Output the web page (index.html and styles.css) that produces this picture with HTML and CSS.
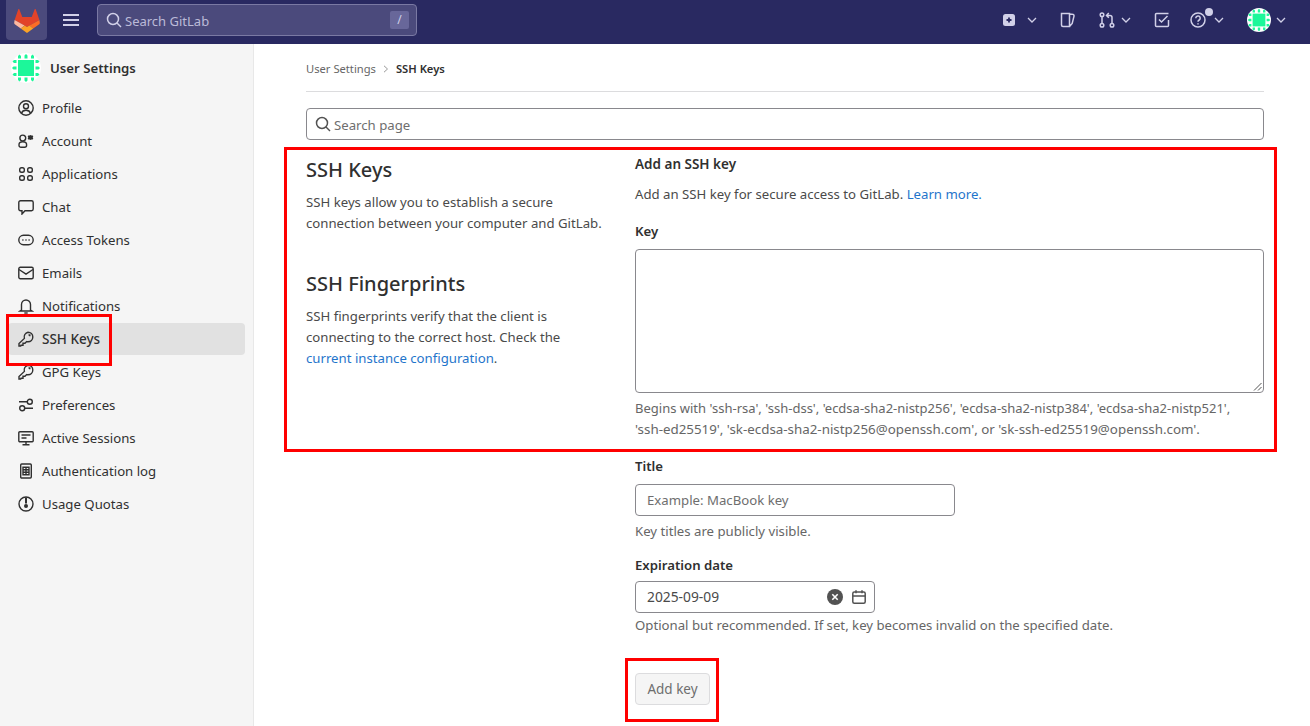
FILE: index.html
```html
<!DOCTYPE html>
<html lang="en">
  <head>
    <meta charset="UTF-8" />
    <meta name="viewport" content="width=device-width, initial-scale=1.0" />
    <title>SSH Keys</title>
    <link rel="stylesheet" href="styles.css">
  </head>
  <body>
    <svg class="sprites" width="0" height="0">
      <symbol id="avatar" viewBox="0 0 30 30">
        <circle cx="15" cy="15" r="15" fill="#fff" />
        <rect x="7" y="7" width="16" height="16" fill="#1cf79a" />
        <g fill="#1cf79a">
          <path d="M8.500 1.500l1.500 1.500v2.500h-3v-2.500zM15 1l1.500 1.500v3h-3v-3zM21.500 1.500l1.500 1.500v2.500h-3v-2.500z" />
          <path d="M8.500 28.500l1.500-1.500v-2.500h-3v2.500zM15 29l1.500-1.500v-3h-3v3zM21.500 28.500l1.500-1.500v-2.500h-3v2.500z" />
          <path d="M1.500 8.500l1.500-1.500h2.500v3h-2.500zM1 15l1.500-1.500h3v3h-3zM1.500 21.500l1.500-1.500h2.500v3h-2.500z" />
          <path d="M28.500 8.500l-1.500-1.500h-2.500v3h2.500zM29 15l-1.500-1.500h-3v3h3zM28.500 21.500l-1.500-1.500h-2.500v3h2.500z" />
        </g>
      </symbol>
    </svg>

    <header class="topbar">
      <a class="logo">
        <svg width="26" height="25" viewBox="0 0 26 25">
          <path fill="#e24329" d="M.6 12 L4.300 1.300 C4.500.8 5.100.8 5.300 1.300 L8.300 9 H17.700 L20.700 1.300 C20.900.8 21.500.8 21.700 1.300 L25.400 12 L13 19Z" />
          <path fill="#fdb9a0" d="M.6 12 L.2 14.800 C.1 15.400.3 15.900.8 16.300 L6.800 20.600 L10.500 17.500Z" />
          <path fill="#fc6d26" d="M25.400 12 L25.800 14.800 C25.900 15.400 25.700 15.900 25.200 16.300 L19.200 20.600 L15.500 17.500Z" />
          <path fill="#fca326" d="M13 25 L6.800 20.600 L10.500 17.500 L13 19 L15.500 17.500 L19.200 20.600Z" />
        </svg>
      </a>
      <button class="burger"><span></span><span></span><span></span></button>
      <div class="top-search">
        <svg class="ico-line" width="16" height="16" viewBox="0 0 16 16"><circle cx="7" cy="7" r="5.500" /><path d="M11 11l4 4" /></svg>
        <span class="top-search-text">Search GitLab</span>
        <kbd class="slash">/</kbd>
      </div>
      <nav class="top-actions">
        <span class="top-btn create">
          <svg width="14" height="14" viewBox="0 0 14 14"><rect x="1" y="1" width="12" height="12" rx="2.500" fill="#d1d0e8" /><path d="M7 4.500v5M4.500 7h5" stroke="#292961" stroke-width="1.800" /></svg>
          <svg class="ico-line chev" width="10" height="6" viewBox="0 0 10 6"><path d="M1 1l4 4 4-4" /></svg>
        </span>
        <span class="top-btn">
          <svg class="ico-line" width="16" height="16" viewBox="0 0 16 16"><path d="M1.500 1.500h8v13h-6.500a1.500 1.500 0 0 1-1.500-1.500zM9.500 2l3 .3a1.500 1.500 0 0 1 1.500 1.800l-1.800 7.400-2.700 3" /></svg>
        </span>
        <span class="top-btn">
          <svg class="ico-line" width="16" height="16" viewBox="0 0 16 16"><circle cx="3" cy="2.800" r="1.800" /><circle cx="3" cy="13.200" r="1.800" /><circle cx="13" cy="13.200" r="1.800" /><path d="M3 4.600v6.800M13 11.400v-6a2 2 0 0 0-2-2h-3M9.800 1l-2.300 2.400 2.300 2.400" /></svg>
          <svg class="ico-line chev" width="10" height="6" viewBox="0 0 10 6"><path d="M1 1l4 4 4-4" /></svg>
        </span>
        <span class="top-btn">
          <svg class="ico-line" width="16" height="16" viewBox="0 0 16 16"><path d="M14.500 8v5.500a1 1 0 0 1-1 1h-11a1 1 0 0 1-1-1v-11a1 1 0 0 1 1-1h12" /><path d="M5 7.500l2.500 2.500 6-6" /></svg>
        </span>
        <span class="top-btn help">
          <svg class="ico-line" width="16" height="16" viewBox="0 0 16 16"><circle cx="8" cy="8" r="7" /><path d="M5.800 6.200a2.200 2.200 0 1 1 3.400 1.800c-.8.500-1.200 1-1.200 1.800" /><path d="M8 11.300v1.200" /></svg>
          <i class="dot"></i>
          <svg class="ico-line chev" width="10" height="6" viewBox="0 0 10 6"><path d="M1 1l4 4 4-4" /></svg>
        </span>
        <span class="top-btn user">
          <svg width="24" height="24"><use href="#avatar" /></svg>
          <svg class="ico-line chev" width="10" height="6" viewBox="0 0 10 6"><path d="M1 1l4 4 4-4" /></svg>
        </span>
      </nav>
    </header>

    <div class="wrap">
      <aside class="sidebar">
        <div class="side-head">
          <svg width="30" height="30"><use href="#avatar" /></svg>
          <strong>User Settings</strong>
        </div>
        <ul class="side-list">
          <li class="side-item">
            <svg class="side-ico" width="16" height="16" viewBox="0 0 16 16"><circle cx="8" cy="8" r="7.200" /><circle cx="8" cy="6.300" r="2.500" /><path d="M3.500 13.200c.6-2 2.400-3 4.500-3s3.900 1 4.500 3" /></svg>
            Profile
          </li>
          <li class="side-item">
            <svg class="side-ico" width="16" height="16" viewBox="0 0 16 16"><circle cx="4.800" cy="5" r="2.900" /><path d="M1 11.800c0-1.700 1.600-3 3.800-3s3.800 1.300 3.800 3v.4c0 1.400-1 2-2 2H3c-1 0-2-.6-2-2z" /><path class="solid" d="M12.500 2l1 .6 1.200-.2.600 1.100-.6 1 .6 1-.6 1.100-1.200-.2-1 .6-1-.6-1.200.2-.6-1.100.6-1-.6-1 .6-1.100 1.200.2z" /></svg>
            Account
          </li>
          <li class="side-item">
            <svg class="side-ico" width="16" height="16" viewBox="0 0 16 16"><rect x="1.700" y="1.700" width="4.600" height="4.600" rx="1.800" /><rect x="9.700" y="1.700" width="4.600" height="4.600" rx="1.800" /><rect x="1.700" y="9.700" width="4.600" height="4.600" rx="1.800" /><rect x="9.700" y="9.700" width="4.600" height="4.600" rx="1.800" /></svg>
            Applications
          </li>
          <li class="side-item">
            <svg class="side-ico" width="16" height="16" viewBox="0 0 16 16"><path d="M2.500 1.800h11a1.700 1.700 0 0 1 1.700 1.700v6.500a1.700 1.700 0 0 1-1.700 1.700H7L4 15v-3.300H2.500A1.700 1.700 0 0 1 .8 10V3.500a1.700 1.700 0 0 1 1.700-1.700z" /></svg>
            Chat
          </li>
          <li class="side-item">
            <svg class="side-ico" width="16" height="16" viewBox="0 0 16 16"><rect x=".8" y="3.300" width="14.400" height="9.400" rx="4.700" /><path class="dots" d="M4.300 8h1.200M7.400 8h1.200M10.500 8h1.200" /></svg>
            Access Tokens
          </li>
          <li class="side-item">
            <svg class="side-ico" width="16" height="16" viewBox="0 0 16 16"><rect x=".8" y="2.300" width="14.400" height="11.400" rx="1.500" /><path d="M1 4.500l7 4.700 7-4.700" /></svg>
            Emails
          </li>
          <li class="side-item">
            <svg class="side-ico" width="16" height="16" viewBox="0 0 16 16"><path d="M3.500 12V6.500a4.500 4.500 0 0 1 9 0V12l1.500 1H2z" /><path d="M6.300 15h3.400" /></svg>
            Notifications
          </li>
          <li class="side-item is-active">
            <svg class="side-ico" width="16" height="16" viewBox="0 0 16 16"><path d="M10 1.200a4.800 4.800 0 0 1 0 9.600c-.5 0-1 0-1.400-.2L7 12.200H5v2H3l-.3.800H1v-2.400l5.400-5.200A4.800 4.800 0 0 1 10 1.200z" /><path d="M10.500 4h1.300v1.300" /></svg>
            SSH Keys
          </li>
          <li class="side-item">
            <svg class="side-ico" width="16" height="16" viewBox="0 0 16 16"><path d="M10 1.200a4.800 4.800 0 0 1 0 9.600c-.5 0-1 0-1.400-.2L7 12.200H5v2H3l-.3.800H1v-2.400l5.400-5.200A4.800 4.800 0 0 1 10 1.200z" /><path d="M10.500 4h1.300v1.300" /></svg>
            GPG Keys
          </li>
          <li class="side-item">
            <svg class="side-ico" width="16" height="16" viewBox="0 0 16 16"><circle cx="11.800" cy="4.800" r="2.500" /><circle cx="4.200" cy="11.200" r="2.500" /><path d="M1 4.800h8.300M6.700 11.200H15" /></svg>
            Preferences
          </li>
          <li class="side-item">
            <svg class="side-ico" width="16" height="16" viewBox="0 0 16 16"><rect x=".8" y="1.800" width="14.400" height="10" rx="1" /><path d="M8 11.800v3M4.500 14.800h7M3.500 5h9M3.500 8h5" /></svg>
            Active Sessions
          </li>
          <li class="side-item">
            <svg class="side-ico" width="16" height="16" viewBox="0 0 16 16"><rect x="2.700" y="1" width="10.600" height="14" rx="1" /><path d="M5 4.200h6v7.600H5zM8 4.200v7.600M5 6.700h6M5 9.300h6" /></svg>
            Authentication log
          </li>
          <li class="side-item">
            <svg class="side-ico" width="16" height="16" viewBox="0 0 16 16"><circle cx="8" cy="8" r="7" /><path class="quota" d="M8 1.500v6" /><circle class="solid" cx="8" cy="10" r="2" /></svg>
            Usage Quotas
          </li>
        </ul>
      </aside>

      <main class="content">
        <div class="crumbs">
          <span>User Settings</span>
          <svg class="crumb-sep" width="6" height="8" viewBox="0 0 6 8"><path d="M1 .8L4.500 4 1 7.200" /></svg>
          <strong>SSH Keys</strong>
        </div>

        <div class="page-search">
          <svg class="ico-line" width="16" height="16" viewBox="0 0 16 16"><circle cx="7" cy="7" r="5.500" /><path d="M11 11l4 4" /></svg>
          <span>Search page</span>
        </div>

        <div class="columns">
          <section class="intro">
            <h4>SSH Keys</h4>
            <p>SSH keys allow you to establish a secure connection between your computer and GitLab.</p>
            <h4 class="second">SSH Fingerprints</h4>
            <p>SSH fingerprints verify that the client is connecting to the correct host. Check the <a href="#">current instance configuration</a>.</p>
          </section>

          <form class="key-form">
            <h5>Add an SSH key</h5>
            <p class="lead">Add an SSH key for secure access to GitLab. <a href="#">Learn more.</a></p>

            <label class="field-label">Key</label>
            <div class="textarea">
              <svg class="grip" width="9" height="9" viewBox="0 0 9 9"><path d="M8.500 1L1 8.500M8.500 5L5 8.500" /></svg>
            </div>
            <p class="hint key-hint">Begins with 'ssh-rsa', 'ssh-dss', 'ecdsa-sha2-nistp256', 'ecdsa-sha2-nistp384', 'ecdsa-sha2-nistp521',<br><span class="key-hint-end">'ssh-ed25519', 'sk-ecdsa-sha2-nistp256@openssh.com', or 'sk-ssh-ed25519@openssh.com'.</span></p>

            <label class="field-label">Title</label>
            <div class="input placeholder">Example: MacBook key</div>
            <p class="hint">Key titles are publicly visible.</p>

            <label class="field-label date-label">Expiration date</label>
            <div class="input date">
              <span>2025-09-09</span>
              <svg width="16" height="16" viewBox="0 0 16 16"><circle cx="8" cy="8" r="8" fill="#525252" /><path d="M5.300 5.300l5.400 5.400M10.700 5.300l-5.400 5.400" stroke="#fff" stroke-width="1.600" /></svg>
              <svg class="ico-line cal" width="14" height="14" viewBox="0 0 14 14"><rect x=".8" y="2" width="12.400" height="11.200" rx="1.500" /><path d="M.8 6h12.400M4 .3v3M10 .3v3" /></svg>
            </div>
            <p class="hint date-hint">Optional but recommended. If set, key becomes invalid on the specified date.</p>

            <button class="add-btn" type="button">Add key</button>
          </form>
        </div>
      </main>
    </div>

    <!-- red boxes drawn on the screenshot -->
    <div class="mark mark-nav"></div>
    <div class="mark mark-form"></div>
    <div class="mark mark-btn"></div>
  </body>
</html>
```

FILE: styles.css
```css
:root {
  --navbar: #292961;
  --navbar-line: #d1d0e8;
  --text: #303030;
  --muted: #666;
  --link: #1f75cb;
  --border: #89888d;
}

* {
  margin: 0;
  padding: 0;
  box-sizing: border-box;
}

html {
  font-size: 14px;
}

body {
  width: 1310px;
  height: 726px;
  overflow: hidden;
  background-color: #fff;
  color: var(--text);
  font-family: 'Noto Sans', 'Open Sans', sans-serif;
  font-size: 13.200px;
}

.sprites {
  display: block;
}

.ico-line {
  fill: none;
  stroke: currentColor;
  stroke-width: 1.500;
  flex: none;
}

/* top bar */
.topbar {
  display: flex;
  align-items: center;
  height: 44px;
  padding: 0 24px 4px 6px;
  background-color: var(--navbar);
  color: var(--navbar-line);
}

.logo {
  display: flex;
  align-items: center;
  justify-content: center;
  width: 41px;
  height: 40px;
  background-color: #4b4a7c;
  border-radius: 0 0 4px 4px;
}

.burger {
  display: flex;
  flex-direction: column;
  gap: 3px;
  width: 16px;
  margin-left: 16px;
  background: none;
  border: 0;
}

.burger span {
  height: 2px;
  background-color: var(--navbar-line);
}

.top-search {
  display: flex;
  align-items: center;
  gap: 3px;
  width: 320px;
  height: 32px;
  margin-left: 18px;
  padding: 0 7px 0 8px;
  background-color: #4b4a7c;
  border: 1px solid #7a79a3;
  border-radius: 4px;
  font-size: 13px;
}

.top-search-text {
  flex: 1;
  padding-top: 1px;
  color: #bbbad8;
}

.slash {
  width: 19px;
  height: 18px;
  background-color: #68679a;
  border-radius: 2px;
  color: #d1d0e8;
  font-family: inherit;
  font-size: 12px;
  line-height: 18px;
  text-align: center;
}

.top-actions {
  display: flex;
  align-items: center;
  margin-left: auto;
}

.top-btn {
  position: relative;
  display: flex;
  align-items: center;
  gap: 6px;
  margin-left: 23px;
}

.top-btn.create {
  gap: 11px;
}

.top-btn.help {
  gap: 8px;
  margin-left: 20px;
}

.top-btn.user {
  gap: 5px;
}

.chev {
  stroke-width: 1.300;
}

.dot {
  position: absolute;
  top: -4px;
  left: 15px;
  width: 8px;
  height: 8px;
  background-color: var(--navbar-line);
  border-radius: 50%;
}

/* sidebar */
.wrap {
  display: flex;
  height: 682px;
}

.sidebar {
  flex: none;
  width: 254px;
  padding: 8px 8px 0;
  background-color: #f5f5f5;
  border-right: 1px solid #e8e8e8;
}

.side-head {
  display: flex;
  align-items: center;
  gap: 9px;
  height: 32px;
  padding-left: 3px;
}

.side-head strong {
  font-weight: 600;
}

.side-list {
  list-style: none;
  margin-top: 8px;
}

.side-item {
  display: flex;
  align-items: center;
  gap: 8px;
  width: 237px;
  height: 32px;
  margin-bottom: 1px;
  padding-left: 10px;
  border-radius: 4px;
}

.side-item.is-active {
  background-color: #e1e1e1;
  font-size: 13.500px;
  font-weight: 500;
}

.side-ico {
  flex: none;
  fill: none;
  stroke: #303030;
  stroke-width: 1.400;
}

.side-ico .solid {
  fill: #303030;
  stroke: none;
}

.side-ico .dots {
  stroke-width: 1.600;
}

.side-ico .quota {
  stroke-width: 2;
}

/* main */
.content {
  flex: 1;
  padding: 0 46px 0 52px;
}

.crumbs {
  display: flex;
  align-items: center;
  gap: 7px;
  height: 48px;
  padding-top: 2px;
  border-bottom: 1px solid #dcdcde;
  color: var(--muted);
  font-size: 11.200px;
}

.crumbs strong {
  color: var(--text);
  font-weight: 600;
}

.crumb-sep {
  fill: none;
  stroke: #999;
}

.page-search {
  display: flex;
  align-items: center;
  gap: 3px;
  height: 32px;
  margin-top: 16px;
  padding: 0 8px;
  border: 1px solid var(--border);
  border-radius: 4px;
  color: #6e6e6e;
}

.page-search span {
  padding-top: 2px;
}

.page-search .ico-line {
  color: #525252;
}

.columns {
  display: grid;
  grid-template-columns: 329px 629px;
  margin-top: 16px;
}

h4 {
  margin-bottom: 8px;
  font-size: 20px;
  font-weight: 500;
  line-height: 28px;
}

h4.second {
  margin-top: 36px;
}

.intro p {
  width: 298px;
  color: #4a4a4a;
  line-height: 21px;
}

a {
  color: var(--link);
  text-decoration: none;
}

.key-form h5 {
  font-size: 13.500px;
  font-weight: 600;
  line-height: 16px;
}

.lead {
  margin-top: 13px;
  color: #4a4a4a;
  line-height: 18px;
}

.field-label {
  display: block;
  margin-top: 19px;
  font-weight: 600;
  line-height: 18px;
}

.textarea {
  position: relative;
  height: 144px;
  margin-top: 9px;
  border: 1px solid var(--border);
  border-radius: 4px;
}

.grip {
  position: absolute;
  right: 1px;
  bottom: 1px;
  fill: none;
  stroke: #555;
}

.hint {
  margin-top: 5px;
  color: var(--muted);
  line-height: 21px;
}

.key-hint {
  margin-bottom: -2px;
  font-size: 13px;
}

.key-hint-end {
  font-size: 13.350px;
}

.date-hint {
  margin-top: 2px;
}

.input {
  display: flex;
  align-items: center;
  width: 320px;
  height: 32px;
  margin-top: 9px;
  padding: 0 11px;
  border: 1px solid var(--border);
  border-radius: 4px;
}

.placeholder {
  color: #6e6e6e;
}

.input.date {
  width: 240px;
  gap: 9px;
  margin-top: 7px;
  padding-right: 8px;
  color: #4a4a4a;
  font-size: 13.800px;
}

.input.date span {
  flex: 1;
  padding-bottom: 2px;
}

.cal {
  color: #525252;
}

.field-label.date-label {
  margin-top: 14px;
}

.add-btn {
  display: block;
  width: 75px;
  height: 32px;
  margin-top: 37px;
  background-color: #f5f5f5;
  border: 1px solid #dcdcde;
  border-radius: 4px;
  color: #6e6e6e;
  font-family: inherit;
  font-size: 13.500px;
}

/* annotations over the page */
.mark {
  position: absolute;
  border: 3px solid #f00;
}

.mark-nav {
  left: 6px;
  top: 314px;
  width: 106px;
  height: 52px;
}

.mark-form {
  left: 284px;
  top: 147px;
  width: 993px;
  height: 305px;
}

.mark-btn {
  left: 625px;
  top: 658px;
  width: 94px;
  height: 64px;
}
```
